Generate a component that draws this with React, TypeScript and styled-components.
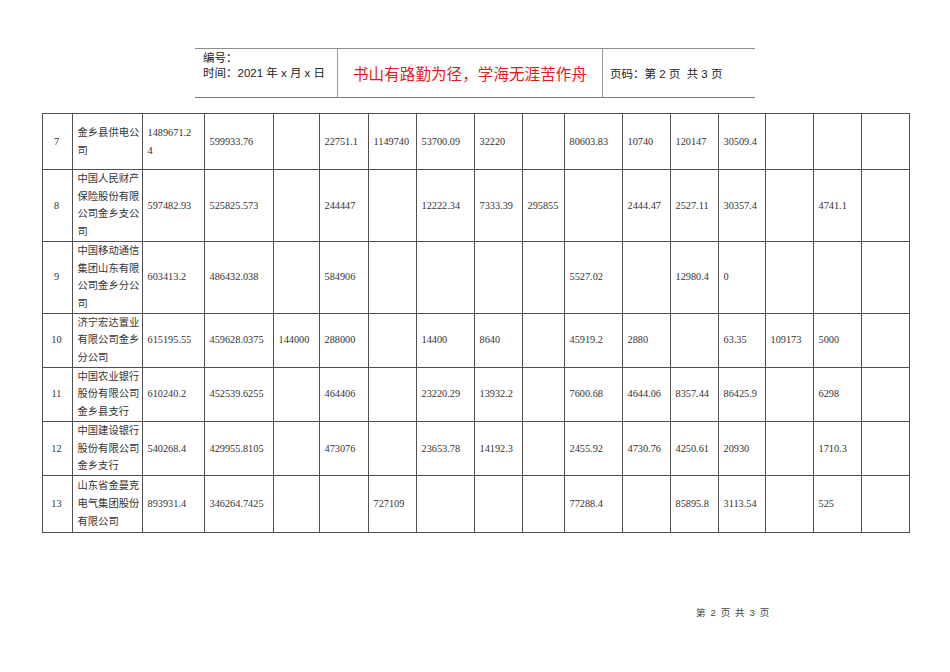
import styled, { createGlobalStyle } from "styled-components"

const GlobalStyle = createGlobalStyle`
  html, body {
    margin: 0;
    padding: 0;
    background: #fff;
  }
  body {
    font-family: "Liberation Sans", "Noto Sans CJK SC", sans-serif;
    color: #222;
  }
`

const Page = styled.div`
  width: 950px;
  min-height: 672px;
  padding-top: 48px;
  box-sizing: border-box;
`

const Header = styled.header`
  margin-left: 195px;
  width: 560px;
  height: 50px;
  box-sizing: border-box;
  display: grid;
  grid-template-columns: 142px 265px 153px;
  border-top: 1px solid #8c8c8c;
  border-bottom: 1px solid #7a7a7a;
`

const MetaCell = styled.div`
  padding: 2px 0 0 8px;
  font-size: 11.5px;
  line-height: 15px;
  color: #222;
`

const TitleCell = styled.div`
  display: flex;
  align-items: center;
  justify-content: center;
  border-left: 1px solid #9a9a9a;
  font-size: 15.5px;
  color: #e3191c;
  letter-spacing: 0.1px;
`

const PageCell = styled.div`
  display: flex;
  align-items: center;
  padding-left: 7px;
  border-left: 1px solid #9a9a9a;
  font-size: 11.5px;
  color: #222;
`

const Sheet = styled.table`
  margin: 15px 0 0 42px;
  width: 867px;
  border-collapse: collapse;
  table-layout: fixed;
  font-family: "Liberation Serif", "Noto Sans CJK SC", serif;
  font-size: 10.3px;
  line-height: 17.7px;
  color: #333;
`

const Row = styled.tr<{ $h: number }>`
  height: ${p => p.$h}px;
`

const Cell = styled.td<{ $center?: boolean }>`
  border: 1px solid #505050;
  padding: 0 2px 0 ${p => (p.$center ? 0 : 4.5)}px;
  vertical-align: middle;
  text-align: ${p => (p.$center ? "center" : "left")};
  word-break: break-all;
  white-space: pre-line;
`

const Footer = styled.footer`
  margin: 74px 0 0 696px;
  font-size: 9.5px;
  line-height: 12px;
  color: #444;
  word-spacing: 2.3px;
`

const widths = [30, 70, 62, 69, 46, 49, 48, 58, 48, 42, 58, 48, 48, 47, 48, 48, 48]

type Entry = { no: string; name: string; h: number; values: string[] }

const rows: Entry[] = [
  {
    no: "7", name: "金乡县供电公司", h: 56,
    values: ["1489671.2\n4", "599933.76", "", "22751.1", "1149740", "53700.09", "32220", "", "80603.83", "10740", "120147", "30509.4", "", "", ""],
  },
  {
    no: "8", name: "中国人民财产保险股份有限公司金乡支公司", h: 70,
    values: ["597482.93", "525825.573", "", "244447", "", "12222.34", "7333.39", "295855", "", "2444.47", "2527.11", "30357.4", "", "4741.1", ""],
  },
  {
    no: "9", name: "中国移动通信集团山东有限公司金乡分公司", h: 71,
    values: ["603413.2", "486432.038", "", "584906", "", "", "", "", "5527.02", "", "12980.4", "0", "", "", ""],
  },
  {
    no: "10", name: "济宁宏达置业有限公司金乡分公司", h: 54,
    values: ["615195.55", "459628.0375", "144000", "288000", "", "14400", "8640", "", "45919.2", "2880", "", "63.35", "109173", "5000", ""],
  },
  {
    no: "11", name: "中国农业银行股份有限公司金乡县支行", h: 53,
    values: ["610240.2", "452539.6255", "", "464406", "", "23220.29", "13932.2", "", "7600.68", "4644.06", "8357.44", "86425.9", "", "6298", ""],
  },
  {
    no: "12", name: "中国建设银行股份有限公司金乡支行", h: 54,
    values: ["540268.4", "429955.8105", "", "473076", "", "23653.78", "14192.3", "", "2455.92", "4730.76", "4250.61", "20930", "", "1710.3", ""],
  },
  {
    no: "13", name: "山东省金曼克电气集团股份有限公司", h: 57,
    values: ["893931.4", "346264.7425", "", "", "727109", "", "", "", "77288.4", "", "85895.8", "3113.54", "", "525", ""],
  },
]

export default function App() {
  return (
    <Page>
      <GlobalStyle />
      <Header>
        <MetaCell>
          编号：<br />
          时间：2021 年 x 月 x 日
        </MetaCell>
        <TitleCell>书山有路勤为径，学海无涯苦作舟</TitleCell>
        <PageCell>页码：第 2 页&nbsp; 共 3 页</PageCell>
      </Header>

      <Sheet>
        <colgroup>
          {widths.map((w, i) => (
            <col key={i} style={{ width: w }} />
          ))}
        </colgroup>
        <tbody>
          {rows.map(r => (
            <Row key={r.no} $h={r.h}>
              <Cell $center>{r.no}</Cell>
              <Cell>{r.name}</Cell>
              {r.values.map((v, i) => (
                <Cell key={i}>{v}</Cell>
              ))}
            </Row>
          ))}
        </tbody>
      </Sheet>

      <Footer>第 2 页 共 3 页</Footer>
    </Page>
  )
}
